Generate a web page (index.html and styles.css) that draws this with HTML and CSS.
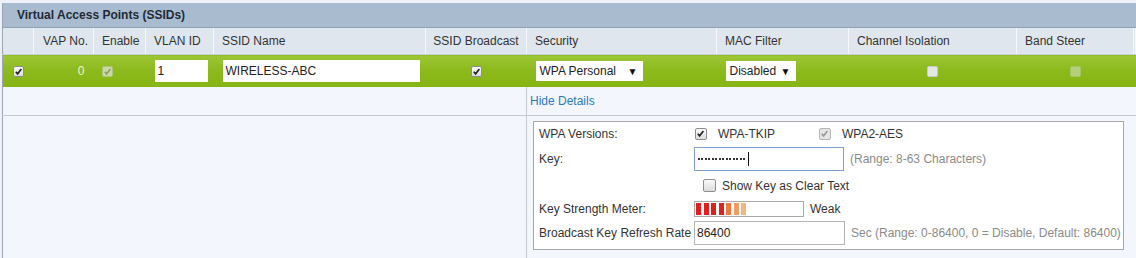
FILE: index.html
```html
<!DOCTYPE html>
<html>
<head>
<meta charset="utf-8">
<link rel="stylesheet" href="styles.css">
</head>
<body>
<div class="page">
<table class="vap">
  <colgroup>
    <col style="width:31px"><col style="width:60px"><col style="width:52px"><col style="width:68px"><col style="width:212px"><col style="width:101px"><col style="width:190px"><col style="width:132px"><col style="width:168px"><col style="width:117px"><col>
  </colgroup>
  <tr class="title"><td colspan="11">Virtual Access Points (SSIDs)</td></tr>
  <tr class="head">
    <th></th><th class="r">VAP No.</th><th>Enable</th><th>VLAN ID</th><th>SSID Name</th><th class="c">SSID Broadcast</th><th>Security</th><th>MAC Filter</th><th>Channel Isolation</th><th>Band Steer</th><th></th>
  </tr>
  <tr class="sel">
    <td class="c"><span class="cb on"><svg viewBox="0 0 10 10"><path d="M2 5.2 L4 7.6 L8.2 2.2" /></svg></span></td>
    <td class="r vapno">0</td>
    <td><span class="cb on dis"><svg viewBox="0 0 10 10"><path d="M2 5.2 L4 7.6 L8.2 2.2" /></svg></span></td>
    <td><div class="inp vlan">1</div></td>
    <td><div class="inp ssid">WIRELESS-ABC</div></td>
    <td class="c"><span class="cb on"><svg viewBox="0 0 10 10"><path d="M2 5.2 L4 7.6 L8.2 2.2" /></svg></span></td>
    <td><div class="sel-box secsel"><span>WPA Personal</span><span class="arr">▼</span></div></td>
    <td><div class="sel-box macsel"><span>Disabled</span><span class="arr">▼</span></div></td>
    <td class="c"><span class="cb off"></span></td>
    <td class="c"><span class="cb dis2"></span></td>
    <td></td>
  </tr>
  <tr class="hide">
    <td colspan="6" class="sep"></td>
    <td colspan="5"><span class="link">Hide Details</span></td>
  </tr>
  <tr class="details">
    <td colspan="6" class="sep"></td>
    <td colspan="5" class="dcell">
      <div class="dbox">
        <div class="lbl">WPA Versions:</div>
        <div class="val vers">
          <span class="opt"><span class="cb on small"><svg viewBox="0 0 10 10"><path d="M2 5.2 L4 7.6 L8.2 2.2" /></svg></span><span>WPA-TKIP</span></span>
          <span class="opt"><span class="cb on small dis"><svg viewBox="0 0 10 10"><path d="M2 5.2 L4 7.6 L8.2 2.2" /></svg></span><span>WPA2-AES</span></span>
        </div>
        <div class="lbl">Key:</div>
        <div class="val"><div class="inp key"><span class="dots"></span><span class="caret"></span></div><span class="hint">(Range: 8-63 Characters)</span></div>
        <div class="lbl"></div>
        <div class="val show"><span class="cb big"></span><span>Show Key as Clear Text</span></div>
        <div class="lbl">Key Strength Meter:</div>
        <div class="val"><div class="meter"><i class="red"></i><i class="red"></i><i class="red"></i><i class="red"></i><i class="org"></i><i class="org2"></i><i class="org3"></i></div><span class="weak">Weak</span></div>
        <div class="lbl">Broadcast Key Refresh Rate</div>
        <div class="val"><div class="inp rate">86400</div><span class="hint">Sec (Range: 0-86400, 0 = Disable, Default: 86400)</span></div>
      </div>
    </td>
  </tr>
</table>
</div>
</body>
</html>
```

FILE: styles.css
```css
html, body {
  margin: 0;
  padding: 0;
  background: #eef2f8;
  font-family: "Liberation Sans", Arial, sans-serif;
  font-size: 12px;
  color: #333;
}
.page {
  padding: 3px 0 0 2px;
}
.vap {
  border-collapse: collapse;
  table-layout: fixed;
  width: 1134px;
  border-left: 1px solid #9aa6b3;
  border-bottom: 1px solid #9aa6b3;
}
.vap td, .vap th {
  padding: 0;
  white-space: nowrap;
  overflow: hidden;
}
.title td {
  height: 24px;
  background: #a9bccf;
  font-weight: bold;
  color: #1f2a35;
  padding-left: 14px;
  border-bottom: 1px solid #8fa1b4;
}
.head th {
  height: 26px;
  background: #dfe6ee;
  font-weight: normal;
  text-align: left;
  padding-left: 8px;
  color: #333;
  border-right: 1px solid #f6f8fb;
  border-bottom: 1px solid #c9d2dc;
}
.head th.r { text-align: right; padding-right: 5px; padding-left: 0; }
.head th.c { text-align: center; padding-left: 0; }
.sel td {
  height: 32px;
  background: linear-gradient(#9dc636, #8cba1c 45%, #86b414);
  padding-left: 8px;
}
.sel td.c { text-align: center; padding-left: 0; }
.sel td.r { text-align: right; padding-right: 9px; padding-left: 0; }
.vapno { color: #eef5c8; }
.cb {
  display: inline-block;
  width: 11px;
  height: 11px;
  box-sizing: border-box;
  border: 1px solid #8e8e8e;
  border-radius: 2px;
  background: linear-gradient(#fafafa, #dcdcdc);
  vertical-align: middle;
  position: relative;
}
.cb svg {
  position: absolute;
  left: 0;
  top: 0;
  width: 9px;
  height: 9px;
  fill: none;
  stroke: #222;
  stroke-width: 1.8;
}
.cb.dis { border-color: #b5b5b5; background: #e6e6e6; }
.cb.dis svg { stroke: #9a9a9a; }
.sel .cb.dis { background: #c8d8a8; border-color: #aec47c; }
.sel .cb.dis svg { stroke: #8ea060; }
.cb.off { background: #e4e6e8; border-color: #c8cbce; }
.cb.dis2 { background: #b6d079; border-color: #a8c46a; }
.sel .cb { margin-top: -1px; }
.inp {
  background: #fff;
  height: 22px;
  box-sizing: border-box;
  line-height: 22px;
  padding-left: 3px;
  color: #222;
}
.vlan { width: 53px; margin-left: 1px; }
.ssid { width: 197px; margin-left: 1px; }
.sel-box {
  display: inline-flex;
  align-items: center;
  justify-content: space-between;
  background: #fff;
  height: 20px;
  box-sizing: border-box;
  padding: 0 5px 0 4px;
  color: #222;
  margin-left: 1px;
}
.secsel { width: 107px; }
.macsel { width: 70px; }
.arr { font-size: 10px; color: #111; }
.hide td {
  height: 28px;
  background: #f3f6fc;
  border-bottom: 1px solid #c3cad3;
}
.sep { border-right: 1px solid #c3cad3; }
.link {
  color: #2c7ab6;
  padding-left: 3px;
}
.details td {
  height: 139px;
  background: #f3f6fc;
  vertical-align: top;
}
.dcell { padding: 5px 0 0 6px !important; }
.dbox {
  width: 591px;
  height: 129px;
  box-sizing: border-box;
  background: #fff;
  border: 1px solid #a7a7a7;
  display: grid;
  grid-template-columns: 155px 1fr;
  grid-template-rows: 23px 28px 25px 22px 26px;
  align-items: center;
  padding: 0 0 0 5px;
  color: #333;
}
.val {
  display: flex;
  align-items: center;
}
.vers .opt { display: inline-flex; align-items: center; gap: 11px; width: 124px; }
.vers .opt:first-child { padding-left: 1px; }
.cb.small { width: 12px; height: 12px; }
.cb.big { width: 13px; height: 13px; margin-left: 9px; margin-right: 6px; }
.key {
  width: 150px;
  height: 24px;
  border: 1px solid #7f9fd0;
  display: flex;
  align-items: center;
  padding-left: 3px;
}
.dots {
  display: inline-block;
  width: 49px;
  height: 2px;
  background: repeating-linear-gradient(to right, #333 0 2px, transparent 2px 3.5px);
}
.caret {
  display: inline-block;
  width: 1px;
  height: 14px;
  background: #111;
  margin-left: 1px;
}
.hint { color: #8a8a8a; margin-left: 6px; }
.meter {
  width: 110px;
  height: 16px;
  box-sizing: border-box;
  border: 1px solid #a9a9a9;
  display: flex;
  gap: 2.5px;
  padding: 1px 0 1px 1px;
}
.meter i { display: block; width: 5px; height: 100%; }
.meter .red { background: #e01f1f; }
.meter .org { background: #ee7a3a; }
.meter .org2 { background: #f29b60; }
.meter .org3 { background: #f4b583; }
.weak { margin-left: 6px; }
.rate {
  width: 151px;
  height: 24px;
  border: 1px solid #b5b5b5;
  line-height: 22px;
  padding-left: 2px;
}
```
